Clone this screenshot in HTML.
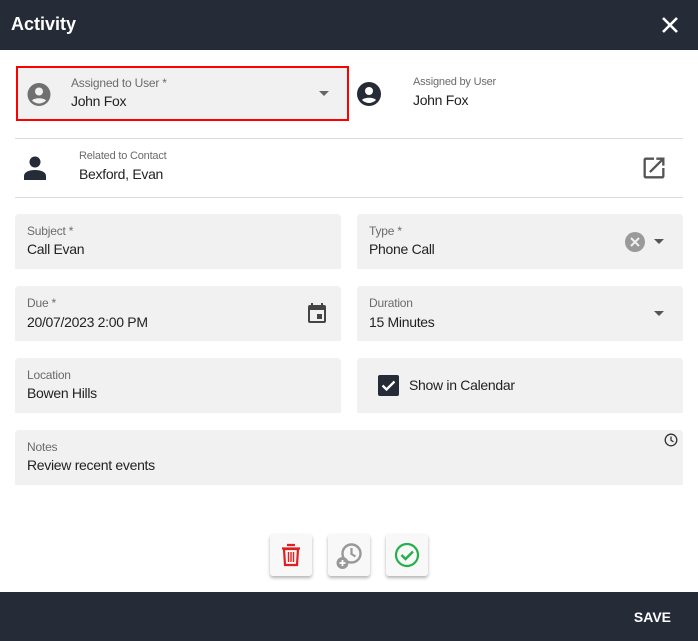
<!DOCTYPE html>
<html><head><style>
*{box-sizing:border-box;margin:0;padding:0}
body{width:698px;height:641px;background:#fff;font-family:"Liberation Sans",sans-serif;position:relative;overflow:hidden}
.hdr{position:absolute;left:0;top:0;width:698px;height:50px;background:#252b37;color:#fff}
.hdr .t{position:absolute;left:11px;top:14px;font-size:18px;font-weight:bold}
.ftr{position:absolute;left:0;top:592px;width:698px;height:49px;background:#252b37;color:#fff}
.ftr .s{position:absolute;right:27px;top:17px;font-size:14px;font-weight:bold}
.f{position:absolute;background:#f1f1f1;border-radius:4px 4px 0 0}
.lbl{position:absolute;font-size:12px;color:#6b6b6b;letter-spacing:-0.2px}
.val{position:absolute;font-size:14px;color:#222;letter-spacing:-0.3px}
.line{position:absolute;left:15px;width:668px;height:1px;background:#dcdcdc}
.btn{position:absolute;top:534px;width:42px;height:42px;background:#f8f8f8;border-radius:3px;box-shadow:0 2px 3px rgba(0,0,0,.3)}
.btn svg{position:absolute;left:8px;top:8px}
</style></head><body>
<div class="hdr"><div class="t">Activity</div>
<svg style="position:absolute;left:661px;top:16px" width="18" height="18" viewBox="0 0 18 18"><path d="M2 2L16 16M16 2L2 16" stroke="#fff" stroke-width="2.6"/></svg></div>

<div class="f" style="left:16px;top:66px;width:333px;height:55px;border:2px solid #f00;border-radius:0"></div>
<svg style="position:absolute;left:27px;top:82px" width="24" height="25" viewBox="0 0 24 24"><circle cx="12" cy="12" r="11.5" fill="#707070"/><circle cx="12" cy="9" r="4" fill="#f1f1f1"/><path d="M5 18c2-3 12-3 14 0c-2 2-5 3-7 3s-5-1-7-3z" fill="#f1f1f1"/></svg>
<div class="lbl" style="left:71px;top:76px">Assigned to User *</div>
<div class="val" style="left:71px;top:93px">John Fox</div>
<svg style="position:absolute;left:319px;top:91px" width="10" height="6"><path d="M0 0H10L5 5z" fill="#666"/></svg>
<svg style="position:absolute;left:357px;top:82px" width="24" height="24" viewBox="0 0 24 24"><circle cx="12" cy="12" r="12" fill="#252b37"/><circle cx="12" cy="9" r="4" fill="#fff"/><path d="M5 18c2-3 12-3 14 0c-2 2-5 3-7 3s-5-1-7-3z" fill="#fff"/></svg>
<div class="lbl" style="left:413px;top:76px;font-size:11px">Assigned by User</div>
<div class="val" style="left:413px;top:92px">John Fox</div>
<div class="line" style="top:138px"></div>

<svg style="position:absolute;left:24px;top:156px" width="22" height="24" viewBox="0 0 22 24"><circle cx="11" cy="6" r="5.5" fill="#252b37"/><path d="M0 24v-4c0-4 5-6 11-6s11 2 11 6v4z" fill="#252b37"/></svg>
<div class="lbl" style="left:79px;top:150px;font-size:11px">Related to Contact</div>
<div class="val" style="left:79px;top:166px">Bexford, Evan</div>
<svg style="position:absolute;left:640px;top:154px" width="28" height="28" viewBox="0 0 24 24"><path d="M19 19H5V5h7V3H5a2 2 0 0 0-2 2v14a2 2 0 0 0 2 2h14a2 2 0 0 0 2-2v-7h-2zM14 3v2h3.6l-9.8 9.8 1.4 1.4L19 6.4V10h2V3z" fill="#555"/></svg>
<div class="line" style="top:197px"></div>

<div class="f" style="left:15px;top:214px;width:326px;height:55px"></div>
<div class="lbl" style="left:27px;top:224px">Subject *</div><div class="val" style="left:27px;top:241px">Call Evan</div>
<div class="f" style="left:357px;top:214px;width:326px;height:55px"></div>
<div class="lbl" style="left:369px;top:224px">Type *</div><div class="val" style="left:369px;top:241px">Phone Call</div>
<svg style="position:absolute;left:625px;top:232px" width="20" height="20" viewBox="0 0 20 20"><circle cx="10" cy="10" r="10" fill="#9a9a9a"/><path d="M6 6L14 14M14 6L6 14" stroke="#f1f1f1" stroke-width="2"/></svg>
<svg style="position:absolute;left:654px;top:239px" width="10" height="6"><path d="M0 0H10L5 5z" fill="#555"/></svg>

<div class="f" style="left:15px;top:286px;width:326px;height:55px"></div>
<div class="lbl" style="left:27px;top:296px">Due *</div><div class="val" style="left:27px;top:314px">20/07/2023 2:00 PM</div>
<svg style="position:absolute;left:305px;top:302px" width="24" height="24" viewBox="0 0 24 24"><path d="M17 12h-5v5h5zM16 1v2H8V1H6v2H5a2 2 0 0 0-2 2v14a2 2 0 0 0 2 2h14a2 2 0 0 0 2-2V5a2 2 0 0 0-2-2h-1V1zm3 18H5V8h14z" fill="#444"/></svg>
<div class="f" style="left:357px;top:286px;width:326px;height:55px"></div>
<div class="lbl" style="left:369px;top:296px">Duration</div><div class="val" style="left:369px;top:314px">15 Minutes</div>
<svg style="position:absolute;left:654px;top:311px" width="10" height="6"><path d="M0 0H10L5 5z" fill="#555"/></svg>

<div class="f" style="left:15px;top:358px;width:326px;height:55px"></div>
<div class="lbl" style="left:27px;top:368px">Location</div><div class="val" style="left:27px;top:385px">Bowen Hills</div>
<div class="f" style="left:357px;top:358px;width:326px;height:55px"></div>
<svg style="position:absolute;left:378px;top:375px" width="21" height="21" viewBox="0 0 21 21"><rect width="21" height="21" rx="2" fill="#252b37"/><path d="M4.5 10.5l4 4 8-8" stroke="#fff" stroke-width="2.3" fill="none"/></svg>
<div class="val" style="left:409px;top:377px">Show in Calendar</div>

<div class="f" style="left:15px;top:430px;width:668px;height:55px"></div>
<div class="lbl" style="left:27px;top:440px">Notes</div><div class="val" style="left:27px;top:457px">Review recent events</div>
<svg style="position:absolute;left:664px;top:433px" width="14" height="14" viewBox="0 0 14 14"><circle cx="7" cy="7" r="5.8" fill="none" stroke="#333" stroke-width="1.3"/><path d="M7 3.5V7.3L9.5 8.8" stroke="#333" stroke-width="1.3" fill="none"/></svg>

<div class="btn" style="left:270px"><svg width="26" height="26" viewBox="0 0 26 26"><path d="M9 3h8M4 6.5h18" stroke="#e02020" stroke-width="2.2"/><path d="M6 7l1 16h12l1-16z" fill="none" stroke="#e02020" stroke-width="2.2"/><path d="M10.5 10v10M13 10v10M15.5 10v10" stroke="#e02020" stroke-width="1.4"/></svg></div>
<div class="btn" style="left:328px"><svg width="28" height="28" viewBox="0 0 28 28"><circle cx="15.5" cy="11.5" r="9" fill="none" stroke="#999" stroke-width="2.4"/><path d="M15.5 6v6l4 2.5" stroke="#999" stroke-width="2.2" fill="none"/><circle cx="6.5" cy="21" r="6" fill="#999"/><path d="M3.5 21h6M6.5 18v6" stroke="#fff" stroke-width="1.7"/></svg></div>
<div class="btn" style="left:386px"><svg width="26" height="26" viewBox="0 0 26 26"><circle cx="13" cy="13" r="11" fill="none" stroke="#22b04b" stroke-width="2.2"/><path d="M7.5 13l4 4L19 9.5" stroke="#22b04b" stroke-width="2.4" fill="none"/></svg></div>

<div class="ftr"><div class="s">SAVE</div></div>
</body></html>
